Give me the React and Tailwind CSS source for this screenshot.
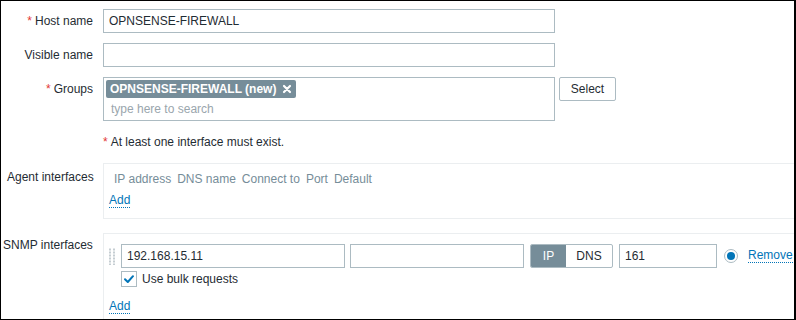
import React from "react";

const F = { fontFamily: '"Liberation Sans", Arial, sans-serif' };

function Label({ req, children, top = "pt-[5px]" }) {
  return (
    <div className={`w-[92px] shrink-0 text-right text-[12px] text-[#1f2c33] ${top} leading-[14px]`}>
      {req && <span className="text-[#e33734] mr-[3px]">*</span>}
      {children}
    </div>
  );
}

function Input({ w, value, className = "" }) {
  return (
    <div
      className={`h-[24px] border border-[#acbbc2] bg-white px-[5px] text-[12px] leading-[22px] text-[#1f2c33] ${className}`}
      style={{ width: w }}
    >
      {value}
    </div>
  );
}

export default function App() {
  return (
    <div
      style={F}
      className="relative w-[796px] h-[320px] overflow-hidden bg-white border-t border-l border-b border-r-2 border-black text-[12px] text-[#1f2c33]"
    >
      <div className="pt-[8px]">
        {/* Host name */}
        <div className="flex gap-[10px]">
          <Label req>Host name</Label>
          <Input w={452} value="OPNSENSE-FIREWALL" />
        </div>
        {/* Visible name */}
        <div className="flex gap-[10px] mt-[10px]">
          <Label>Visible name</Label>
          <Input w={452} value="" />
        </div>
        {/* Groups */}
        <div className="flex gap-[10px] mt-[10px]">
          <Label req>Groups</Label>
          <div className="w-[452px] h-[44px] border border-[#acbbc2] bg-white pl-[2px] pt-[2px]">
            <div className="inline-flex items-center h-[18px] rounded-[2px] bg-[#768d99] pl-[4px] pr-[4px] text-white font-bold text-[12px] leading-[18px]">
              OPNSENSE-FIREWALL (new)
              <svg width="10" height="10" viewBox="0 0 10 10" className="ml-[6px]">
                <path d="M2 2 L8 8 M8 2 L2 8" stroke="white" strokeWidth="2.2" strokeLinecap="round" />
              </svg>
            </div>
            <div className="pl-[5px] mt-[2px] text-[#9aa6ad] leading-[18px]">type here to search</div>
          </div>
          <div className="-ml-[6px] h-[24px] w-[57px] border border-[#acbbc2] bg-white text-center leading-[22px] rounded-[2px]">
            Select
          </div>
        </div>
        {/* Notice */}
        <div className="mt-[14px] pl-[102px] leading-[14px]">
          <span className="text-[#e33734] mr-[3px]">*</span>At least one interface must exist.
        </div>
        {/* Agent interfaces */}
        <div className="flex gap-[10px] mt-[14px]">
          <div className="w-[92px] shrink-0 pl-[6px] pt-[7px] leading-[14px] whitespace-nowrap">Agent interfaces</div>
          <div className="flex-1 h-[56px] border border-[#ebeef0] border-r-0 bg-white pl-[10px] pt-[8px]">
            <div className="flex gap-[6px] text-[#768d99] leading-[14px]">
              <span>IP address</span>
              <span>DNS name</span>
              <span>Connect to</span>
              <span>Port</span>
              <span>Default</span>
            </div>
            <div className="mt-[5px] -ml-[5px]">
              <span className="text-[#0275b8] border-b border-dotted border-[#0275b8] leading-[13px] inline-block">Add</span>
            </div>
          </div>
        </div>
        {/* SNMP interfaces */}
        <div className="flex gap-[10px] mt-[14px]">
          <div className="w-[92px] shrink-0 pl-[2px] pt-[5px] leading-[14px] whitespace-nowrap">SNMP interfaces</div>
          <div className="flex-1 h-[100px] border border-[#ebeef0] border-r-0 bg-white pt-[10px]">
            <div className="flex items-center">
              <svg width="8" height="17" viewBox="0 0 8 17" className="ml-[4px] mr-[5px]">
                {[0, 1, 2, 3, 4, 5].map((i) => (
                  <g key={i}>
                    <rect x="1" y={i * 3 + 0.5} width="2" height="2" fill="#c5cdd2" />
                    <rect x="5" y={i * 3 + 0.5} width="2" height="2" fill="#c5cdd2" />
                  </g>
                ))}
              </svg>
              <Input w={224} value="192.168.15.11" />
              <Input w={174} value="" className="ml-[5px]" />
              <div className="ml-[6px] flex h-[24px] w-[83px] border border-[#acbbc2] rounded-[2px] overflow-hidden">
                <div className="w-[35px] bg-[#768d99] text-white text-center leading-[22px]">IP</div>
                <div className="flex-1 text-center leading-[22px]">DNS</div>
              </div>
              <Input w={98} value="161" className="ml-[6px]" />
              <div className="ml-[7px] w-[14px] h-[14px] rounded-full border border-[#acbbc2] flex items-center justify-center">
                <div className="w-[8px] h-[8px] rounded-full bg-[#0275b8]" />
              </div>
              <span className="ml-[10px] text-[#0275b8] border-b border-dotted border-[#0275b8] leading-[13px] whitespace-nowrap">Remove</span>
            </div>
            <div className="flex items-center mt-[3px] ml-[17px]">
              <div className="w-[16px] h-[16px] border border-[#acbbc2] bg-white flex items-center justify-center">
                <svg width="12" height="12" viewBox="0 0 12 12">
                  <path d="M2 6.2 L4.8 9 L10 3.2" stroke="#0275b8" strokeWidth="2" fill="none" strokeLinecap="round" strokeLinejoin="round" />
                </svg>
              </div>
              <span className="ml-[5px] leading-[14px]">Use bulk requests</span>
            </div>
            <div className="mt-[10px] ml-[5px]">
              <span className="text-[#0275b8] border-b border-dotted border-[#0275b8] leading-[13px] inline-block">Add</span>
            </div>
          </div>
        </div>
      </div>
    </div>
  );
}
